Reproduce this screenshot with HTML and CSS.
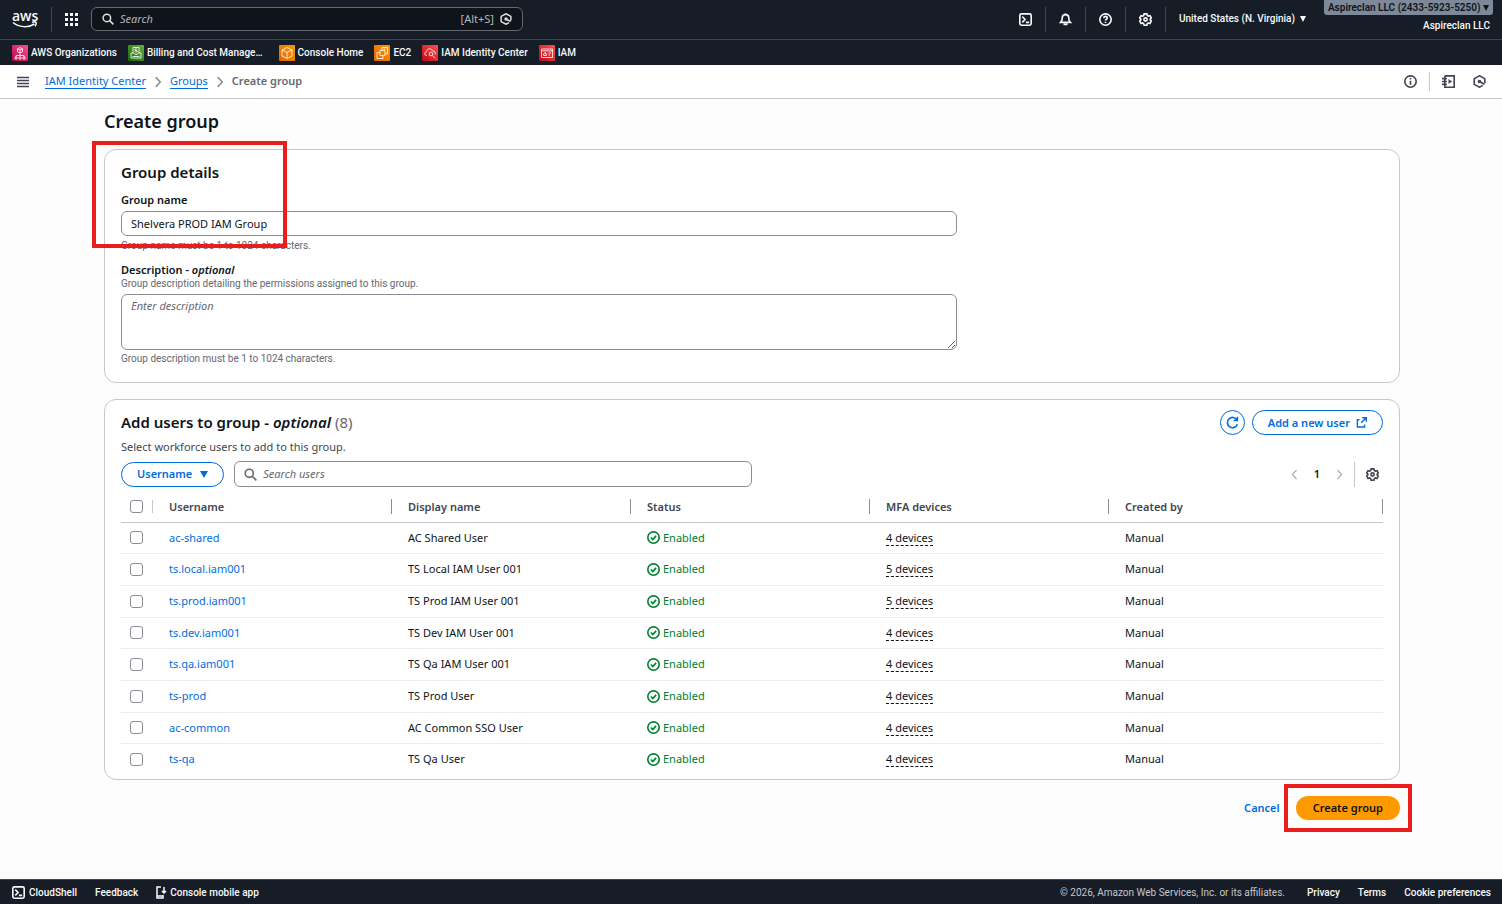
FILE: index.html
```html
<!DOCTYPE html>
<html lang="en">
<head>
    <meta charset="UTF-8">
    <meta name="viewport" content="width=device-width, initial-scale=1.0">
    <title>Create group | IAM Identity Center</title>
    <link rel="stylesheet" href="styles.css">
</head>
<body>
    <!-- shared icons -->
    <svg class="sprite" aria-hidden="true">
        <symbol id="i-search" viewBox="0 0 16 16"><circle cx="6.5" cy="6.5" r="5"/><path d="m10.2 10.2 5 5"/></symbol>
        <symbol id="i-gear" viewBox="0 0 16 16"><path d="M6.3 1h3.4l.5 2 1.3.8 2-.6 1.7 3-1.5 1.3v1l1.5 1.4-1.7 3-2-.6-1.3.8-.5 2H6.3l-.5-2-1.3-.8-2 .6-1.7-3 1.5-1.4v-1L.8 6.2l1.700-3 2 .6L5.800 3z"/><circle cx="8" cy="8" r="2"/></symbol>
        <symbol id="i-shell" viewBox="0 0 16 16"><rect x="1" y="1" width="14" height="14" rx="2"/><path d="m4 4.500 3.500 3.500L4 11.500M8.500 11.500h4"/></symbol>
        <symbol id="i-hex" viewBox="0 0 16 16"><path d="M14.500 10V4.500L8 1 1.500 4.500v7L8 15l4-2.200M8 8l6 3.300"/><circle cx="8" cy="8" r="1.300"/></symbol>
        <symbol id="i-check" viewBox="0 0 16 16"><circle cx="8" cy="8" r="7"/><path d="m4.800 8 2.400 2.500 4-4.500"/></symbol>
        <symbol id="i-right" viewBox="0 0 16 16"><path d="m5 1.500 6 6.500-6 6.500"/></symbol>
        <symbol id="i-left" viewBox="0 0 16 16"><path d="M11 1.500 5 8l6 6.500"/></symbol>
    </svg>

    <header>
        <div class="topbar">
            <a href="#" class="logo" aria-label="AWS home">
                <span>aws</span>
                <svg viewBox="0 0 26 7"><path d="M1 1.500C7 6.500 16 7 22.500 3"/><path d="M20 1.500c2-.8 3.500-.8 4 0s0 2.300-1 3.700"/></svg>
            </a>
            <button class="apps" aria-label="Services">
                <svg viewBox="0 0 13 13"><path d="M0 0h3v3H0zM5 0h3v3H5zM10 0h3v3h-3zM0 5h3v3H0zM5 5h3v3H5zM10 5h3v3h-3zM0 10h3v3H0zM5 10h3v3H5zM10 10h3v3h-3z"/></svg>
            </button>
            <div class="top-search">
                <svg class="icon"><use href="#i-search"/></svg>
                <input type="search" placeholder="Search" aria-label="Search">
                <span>[Alt+S]</span>
                <svg class="icon icon-hex"><use href="#i-hex"/></svg>
            </div>
            <div class="tools">
                <button aria-label="CloudShell"><svg class="icon"><use href="#i-shell"/></svg></button>
                <button aria-label="Notifications"><svg class="icon" viewBox="0 0 16 16"><path d="M2 11.500c1.500-1.500 2-2.500 2-5.500a4 4 0 0 1 8 0c0 3 .5 4 2 5.500z"/><path d="M6.500 12.500v1.500h3v-1.500M8 .5V2"/></svg></button>
                <button aria-label="Help"><svg class="icon" viewBox="0 0 16 16"><circle cx="8" cy="8" r="7"/><path d="M5.800 6.300C5.900 3.500 10.200 3.600 10.200 6c0 1.700-2.200 1.700-2.200 3.300M8 10.800v1.600"/></svg></button>
                <button aria-label="Settings"><svg class="icon"><use href="#i-gear"/></svg></button>
                <button class="region">United States (N. Virginia) <i class="caret"></i></button>
            </div>
            <div class="account">
                <button>Aspireclan LLC (2433-5923-5250) <i class="caret"></i></button>
                <span>Aspireclan LLC</span>
            </div>
        </div>
        <nav class="favorites" aria-label="Favorites">
            <a href="#"><svg class="pink" viewBox="0 0 16 16"><path d="m8 2.500 2.500 1.300v3L8 8 5.500 6.800v-3zM5.500 3.800 8 5l2.500-1.200M8 5v5.500M4 12v-1.500h8V12M3 12h2v2H3zM7 12h2v2H7zM11 12h2v2h-2z"/></svg>AWS Organizations</a>
            <a href="#" class="wide"><svg class="green" viewBox="0 0 16 16"><path d="M5 8V2.500h6V8M3 8h3l1 1.500h2L10 8h3v5H3zM9 4H7v1.500h2V7H7M4.500 11.500h7"/></svg>Billing and Cost Manage…</a>
            <a href="#"><svg class="orange" viewBox="0 0 16 16"><path d="m8 2.500 5 2.500v6l-5 2.500L3 11V5zM3 5l5 2.500L13 5M8 7.500v6"/></svg>Console Home</a>
            <a href="#"><svg class="orange" viewBox="0 0 16 16"><path d="M6 5.500h5v5H6zM9 10.500v3H3v-6h3M8 5.500v-3h5.500V9H11M4.500 9h1M9.500 4h2"/></svg>EC2</a>
            <a href="#"><svg class="red" viewBox="0 0 16 16"><path d="M5 10.500C2 10.500 2 7 4.500 6.800 5 3 9.500 3 10.500 6c2.500-.3 3.500 2 2.500 3.500"/><circle cx="9" cy="9" r="1.800"/><path d="m10.300 10.300 2.700 3"/></svg>IAM Identity Center</a>
            <a href="#"><svg class="red" viewBox="0 0 16 16"><path d="M2.500 4h11v8.500h-11zM2.500 5.800h11M4.500 10.500V8.800h3v1.700zM5.500 7.300h1v1.500M9.500 8h2.500M9.500 10h1.500"/></svg>IAM</a>
        </nav>
    </header>

    <div class="crumbs-bar">
        <button aria-label="Open navigation"><svg class="icon icon-menu" viewBox="0 0 12 12"><path d="M0 1.500h12M0 4.500h12M0 7.500h12M0 10.500h12"/></svg></button>
        <nav class="crumbs" aria-label="Breadcrumbs">
            <a href="#">IAM Identity Center</a>
            <svg class="icon"><use href="#i-right"/></svg>
            <a href="#">Groups</a>
            <svg class="icon"><use href="#i-right"/></svg>
            <span>Create group</span>
        </nav>
        <div class="panel-tools">
            <button aria-label="Info"><svg class="icon" viewBox="0 0 16 16"><circle cx="8" cy="8" r="7"/><path d="M8 3.800v1.700M8 7v5"/></svg></button>
            <button aria-label="Tutorials"><svg class="icon" viewBox="0 0 16 16"><path d="M3.500 1H15v14H3.500V1M0 4.500h6M0 8h6M0 11.500h6"/><path class="fill" d="m8 5 4.500 3L8 11z"/></svg></button>
            <button aria-label="Amazon Q"><svg class="icon"><use href="#i-hex"/></svg></button>
        </div>
    </div>

    <main>
        <h1>Create group</h1>

        <section class="card details">
            <h2>Group details</h2>
            <label for="groupName">Group name</label>
            <input type="text" id="groupName" value="Shelvera PROD IAM Group">
            <p class="hint">Group name must be 1 to 1024 characters.</p>
            <label for="groupDesc">Description - <i>optional</i></label>
            <p class="hint">Group description detailing the permissions assigned to this group.</p>
            <textarea id="groupDesc" placeholder="Enter description"></textarea>
            <p class="hint">Group description must be 1 to 1024 characters.</p>
            <div class="marker"></div>
        </section>

        <section class="card users">
            <div class="users-head">
                <h2>Add users to group - <i>optional</i> <span>(8)</span></h2>
                <div class="actions">
                    <button class="btn round" aria-label="Refresh"><svg class="icon" viewBox="0 0 16 16"><path d="M14 10A6.300 6.300 0 1 1 13.500 5M14 1v4.500H9.500"/></svg></button>
                    <a href="#" class="btn">Add a new user <svg class="icon" viewBox="0 0 16 16"><path d="M5 4H2v10.500h10.500V11M9 1h6v6M15 1 7.500 8.500"/></svg></a>
                </div>
            </div>
            <p class="desc">Select workforce users to add to this group.</p>
            <div class="filters">
                <button class="btn">Username <i class="caret"></i></button>
                <div class="user-search">
                    <svg class="icon"><use href="#i-search"/></svg>
                    <input type="search" placeholder="Search users" aria-label="Search users">
                </div>
                <div class="pages">
                    <button aria-label="Previous page" disabled><svg class="icon"><use href="#i-left"/></svg></button>
                    <button class="current">1</button>
                    <button aria-label="Next page" disabled><svg class="icon"><use href="#i-right"/></svg></button>
                    <button class="prefs" aria-label="Preferences"><svg class="icon"><use href="#i-gear"/></svg></button>
                </div>
            </div>
            <table>
                <thead>
                    <tr>
                        <th class="sel"><div><input type="checkbox" aria-label="Select all users"></div></th>
                        <th><div>Username</div></th>
                        <th><div>Display name</div></th>
                        <th><div>Status</div></th>
                        <th><div>MFA devices</div></th>
                        <th class="last"><div>Created by</div></th>
                    </tr>
                </thead>
                <tbody>
                    <tr>
                        <td class="sel"><input type="checkbox" aria-label="Select ac-shared"></td>
                        <td><a href="#">ac-shared</a></td>
                        <td>AC Shared User</td>
                        <td><span class="enabled"><svg class="icon"><use href="#i-check"/></svg>Enabled</span></td>
                        <td><span class="devices">4 devices</span></td>
                        <td>Manual</td>
                    </tr>
                    <tr>
                        <td class="sel"><input type="checkbox" aria-label="Select ts.local.iam001"></td>
                        <td><a href="#">ts.local.iam001</a></td>
                        <td>TS Local IAM User 001</td>
                        <td><span class="enabled"><svg class="icon"><use href="#i-check"/></svg>Enabled</span></td>
                        <td><span class="devices">5 devices</span></td>
                        <td>Manual</td>
                    </tr>
                    <tr>
                        <td class="sel"><input type="checkbox" aria-label="Select ts.prod.iam001"></td>
                        <td><a href="#">ts.prod.iam001</a></td>
                        <td>TS Prod IAM User 001</td>
                        <td><span class="enabled"><svg class="icon"><use href="#i-check"/></svg>Enabled</span></td>
                        <td><span class="devices">5 devices</span></td>
                        <td>Manual</td>
                    </tr>
                    <tr>
                        <td class="sel"><input type="checkbox" aria-label="Select ts.dev.iam001"></td>
                        <td><a href="#">ts.dev.iam001</a></td>
                        <td>TS Dev IAM User 001</td>
                        <td><span class="enabled"><svg class="icon"><use href="#i-check"/></svg>Enabled</span></td>
                        <td><span class="devices">4 devices</span></td>
                        <td>Manual</td>
                    </tr>
                    <tr>
                        <td class="sel"><input type="checkbox" aria-label="Select ts.qa.iam001"></td>
                        <td><a href="#">ts.qa.iam001</a></td>
                        <td>TS Qa IAM User 001</td>
                        <td><span class="enabled"><svg class="icon"><use href="#i-check"/></svg>Enabled</span></td>
                        <td><span class="devices">4 devices</span></td>
                        <td>Manual</td>
                    </tr>
                    <tr>
                        <td class="sel"><input type="checkbox" aria-label="Select ts-prod"></td>
                        <td><a href="#">ts-prod</a></td>
                        <td>TS Prod User</td>
                        <td><span class="enabled"><svg class="icon"><use href="#i-check"/></svg>Enabled</span></td>
                        <td><span class="devices">4 devices</span></td>
                        <td>Manual</td>
                    </tr>
                    <tr>
                        <td class="sel"><input type="checkbox" aria-label="Select ac-common"></td>
                        <td><a href="#">ac-common</a></td>
                        <td>AC Common SSO User</td>
                        <td><span class="enabled"><svg class="icon"><use href="#i-check"/></svg>Enabled</span></td>
                        <td><span class="devices">4 devices</span></td>
                        <td>Manual</td>
                    </tr>
                    <tr>
                        <td class="sel"><input type="checkbox" aria-label="Select ts-qa"></td>
                        <td><a href="#">ts-qa</a></td>
                        <td>TS Qa User</td>
                        <td><span class="enabled"><svg class="icon"><use href="#i-check"/></svg>Enabled</span></td>
                        <td><span class="devices">4 devices</span></td>
                        <td>Manual</td>
                    </tr>
                </tbody>
            </table>
        </section>

        <div class="submit">
            <a href="#">Cancel</a>
            <div class="primary-wrap">
                <button class="primary">Create group</button>
                <div class="marker"></div>
            </div>
        </div>
    </main>

    <footer>
        <a href="#"><svg class="icon"><use href="#i-shell"/></svg>CloudShell</a>
        <a href="#">Feedback</a>
        <a href="#"><svg class="icon icon-phone" viewBox="0 0 10 13"><path d="M5 1H1v11h6V9M1 10h6M8 1v6M6 5l2 2 2-2"/></svg>Console mobile app</a>
        <span class="copyright">© 2026, Amazon Web Services, Inc. or its affiliates.</span>
        <a href="#">Privacy</a>
        <a href="#">Terms</a>
        <a href="#">Cookie preferences</a>
    </footer>
</body>
</html>
```

FILE: styles.css
```css
* {
    box-sizing: border-box;
}
body {
    margin: 0;
    min-height: 100vh;
    display: flex;
    flex-direction: column;
    background: #fcfcfd;
    color: #0f141a;
    font: 11px/16px "Noto Sans", "Open Sans", sans-serif;
}
h1, h2, p {
    margin: 0;
}
button, input, textarea {
    font: inherit;
    color: inherit;
}
button {
    padding: 0;
    border: 0;
    background: none;
    cursor: pointer;
}
a {
    color: #006ce0;
    text-decoration: none;
}
.sprite {
    position: absolute;
    width: 0;
    height: 0;
}
.icon {
    width: 13px;
    height: 13px;
    flex: none;
    fill: none;
    stroke: currentColor;
    stroke-width: 2;
    overflow: visible;
}
.icon .fill {
    fill: currentColor;
    stroke: none;
}
.caret {
    display: inline-block;
    border: 3px solid transparent;
    border-top: 6px solid currentColor;
    border-bottom: 0;
}

/* top navigation */
header, footer {
    background: #161d26;
    color: #f9f9fa;
    font-family: Roboto, "Noto Sans", sans-serif;
    font-size: 10px;
    font-weight: 500;
}
header a, footer a {
    color: inherit;
}
.topbar {
    display: flex;
    align-items: center;
    height: 40px;
    padding-bottom: 1px;
    border-bottom: 1px solid #424650;
}
.logo {
    width: 26px;
    margin-left: 12px;
    text-align: center;
}
.logo span {
    display: block;
    font: 600 14px/11px "Open Sans", sans-serif;
}
.logo svg {
    display: block;
    width: 26px;
    height: 7px;
    fill: none;
    stroke: currentColor;
    stroke-width: 1.5;
}
.apps {
    display: flex;
    align-items: center;
    height: 25px;
    margin-left: 13px;
    padding: 0 13px;
    border-left: 1px solid #424650;
}
.apps svg {
    width: 13px;
    height: 13px;
    fill: currentColor;
}
.top-search {
    display: flex;
    align-items: center;
    gap: 6px;
    width: 432px;
    height: 24px;
    padding: 0 10px;
    border: 1px solid #656871;
    border-radius: 6px;
    background: #0f141a;
    color: #b4b4bb;
    font: 11px/16px "Noto Sans", sans-serif;
}
.top-search .icon {
    width: 12px;
    height: 12px;
    color: #dedee3;
}
input[type="search"] {
    flex: 1;
    min-width: 0;
    padding: 0;
    border: 0;
    outline: 0;
    background: none;
}
::placeholder {
    color: inherit;
    font-style: italic;
    opacity: 1;
}
.tools {
    display: flex;
    align-items: center;
    margin-left: auto;
}
.tools button {
    display: flex;
    align-items: center;
    justify-content: center;
    width: 40px;
    height: 25px;
    border-right: 1px solid #424650;
}
.tools .region {
    width: auto;
    padding: 0 18px 0 13px;
    gap: 5px;
    border: 0;
}
.account {
    display: flex;
    flex-direction: column;
    align-items: flex-end;
    align-self: flex-start;
    margin-right: 9px;
}
.account button {
    padding: 0 4px;
    border-radius: 0 0 3px 3px;
    background: #7d8998;
    color: #0f141a;
    font-weight: 600;
    line-height: 15px;
}
.account span {
    margin: 3px 3px 0 0;
}
.favorites {
    display: flex;
    align-items: center;
    gap: 11px;
    height: 25px;
    padding: 0 12px;
}
.favorites a {
    display: flex;
    align-items: center;
    gap: 3px;
}
.favorites .wide {
    margin-right: 5px;
}
.favorites svg {
    width: 16px;
    height: 16px;
    border-radius: 1px;
    fill: none;
    stroke: #ffffff;
    stroke-width: 0.8;
}
.pink {
    background: linear-gradient(45deg, #b0084d, #ff4f8b);
}
.green {
    background: linear-gradient(45deg, #1b660f, #6cae3e);
}
.orange {
    background: linear-gradient(45deg, #e26400, #f90);
}
.red {
    background: linear-gradient(45deg, #bd0816, #ff5252);
}

/* breadcrumbs */
.crumbs-bar {
    display: flex;
    align-items: center;
    height: 34px;
    padding: 0 16px;
    border-bottom: 1px solid #c6c6cd;
    background: #ffffff;
    color: #424650;
}
.crumbs-bar button {
    display: flex;
}
.crumbs-bar > button {
    margin-left: 1px;
}
.icon-menu {
    width: 12px;
    height: 12px;
    stroke-width: 1.4;
}
.crumbs {
    display: flex;
    align-items: center;
    gap: 6px;
    margin-left: 16px;
}
.crumbs a {
    border-bottom: 1px solid #006ce0;
    line-height: 14px;
}
.crumbs .icon {
    width: 12px;
    height: 12px;
    color: #8c8c94;
}
.crumbs span {
    padding-bottom: 1px;
    font-weight: 600;
    color: #656871;
}
.panel-tools {
    display: flex;
    align-items: center;
    gap: 18px;
    margin-left: auto;
}
.panel-tools button:first-child {
    margin-right: -6px;
    padding: 3px 12px 3px 0;
    border-right: 1px solid #c6c6cd;
}

/* content */
main {
    flex: 1;
    padding: 10px 102px 0 104px;
}
h1 {
    font-size: 18px;
    font-weight: 600;
    line-height: 24px;
}
h2 {
    font-size: 15px;
    font-weight: 600;
    line-height: 20px;
}
.card {
    position: relative;
    padding: 0 16px;
    border: 1px solid #c6c6cd;
    border-radius: 12px;
    background: #ffffff;
}
.details {
    margin-top: 16px;
    padding-top: 12px;
    padding-bottom: 17px;
}
.details label {
    display: block;
    margin-top: 10px;
    font-weight: 600;
}
.details input, .details textarea {
    display: block;
    width: 100%;
    max-width: 836px;
    padding: 3px 9px;
    border: 1px solid #8c8c94;
    border-radius: 6px;
    background: #ffffff;
}
.details input {
    height: 25px;
    margin-top: 3px;
}
.details textarea {
    height: 56px;
    margin-top: 4px;
    color: #656871;
}
.hint {
    color: #656871;
    font-family: Roboto, "Noto Sans", sans-serif;
    font-size: 10px;
    line-height: 12px;
}
.details input + .hint {
    margin-top: 4px;
}
.details textarea + .hint {
    margin-top: 3px;
}

/* red boxes that point at the steps to take */
.marker {
    position: absolute;
    border: 4px solid #eb1c1c;
    pointer-events: none;
}
.details .marker {
    top: -9px;
    left: -13px;
    width: 195px;
    height: 107px;
}
.primary-wrap .marker {
    inset: -12px;
}

/* users table */
.users {
    margin-top: 16px;
    padding-top: 10px;
    padding-bottom: 4px;
}
.users-head {
    display: flex;
    align-items: center;
    justify-content: space-between;
}
.users h2 {
    padding-bottom: 2px;
}
.users h2 span {
    color: #656871;
    font-weight: 400;
}
.actions {
    display: flex;
    gap: 7px;
}
.btn {
    display: flex;
    align-items: center;
    justify-content: center;
    gap: 8px;
    height: 25px;
    padding: 0 15px;
    border: 1px solid #006ce0;
    border-radius: 13px;
    color: #006ce0;
    font-weight: 600;
}
.actions .btn {
    gap: 6px;
}
.btn .icon {
    width: 11px;
    height: 11px;
}
.btn .caret {
    border-width: 7px 4px 0;
}
.round {
    width: 25px;
    padding: 0;
}
.round .icon {
    width: 13px;
    height: 13px;
}
.desc {
    margin-top: 4px;
    color: #424650;
}
.filters {
    display: flex;
    align-items: center;
    gap: 10px;
    margin-top: 6px;
}
.user-search {
    display: flex;
    align-items: center;
    gap: 6px;
    flex: 1;
    max-width: 518px;
    height: 26px;
    padding: 0 9px;
    border: 1px solid #8c8c94;
    border-radius: 6px;
    color: #656871;
}
.pages {
    display: flex;
    align-items: center;
    gap: 14px;
    margin-left: auto;
}
.pages button {
    display: flex;
    color: #424650;
}
.pages button:disabled {
    color: #b4b4bb;
}
.pages button:disabled .icon {
    width: 11px;
    height: 11px;
}
.pages .current {
    color: #0f141a;
    font-weight: 600;
}
.pages .prefs {
    margin-left: -5px;
    padding: 6px 4px 6px 11px;
    border-left: 1px solid #c6c6cd;
}
table {
    width: 100%;
    margin-top: 4px;
    border-collapse: collapse;
    table-layout: fixed;
}
th, td {
    width: 239px;
    padding: 0;
    text-align: left;
}
th {
    height: 31px;
    border-bottom: 1px solid #c6c6cd;
    color: #424650;
    font-weight: 600;
}
th div {
    padding-left: 16px;
    border-right: 1px solid #8c8c94;
    line-height: 15px;
}
th.last {
    width: auto;
}
td {
    height: 32px;
    padding-left: 16px;
    border-bottom: 1px solid #ebebf0;
}
tbody tr:nth-child(3n + 1) td {
    height: 31px;
}
tbody tr:last-child td {
    border-bottom: 0;
}
.sel {
    width: 32px;
    padding-left: 9px;
}
th.sel {
    padding-left: 0;
}
th.sel div {
    padding-left: 9px;
    border-color: #c6c6cd;
}
input[type="checkbox"] {
    appearance: none;
    display: block;
    width: 13px;
    height: 13px;
    margin: 0;
    border: 1px solid #8c8c94;
    border-radius: 3px;
    background: #ffffff;
}
.enabled {
    display: flex;
    align-items: center;
    gap: 3px;
    color: #00802f;
}
.devices {
    border-bottom: 1px dashed #0f141a;
}

.submit {
    display: flex;
    align-items: center;
    justify-content: flex-end;
    gap: 16px;
    margin-top: 16px;
    font-weight: 600;
}
.primary-wrap {
    position: relative;
}
.primary {
    display: block;
    height: 24px;
    padding: 0 17px;
    border-radius: 12px;
    background: #ff9900;
}

footer {
    display: flex;
    align-items: center;
    gap: 18px;
    height: 25px;
    padding: 1px 11px 0 12px;
    border-top: 1px solid #424650;
}
footer a {
    display: flex;
    align-items: center;
    gap: 4px;
}
.icon-phone {
    width: 10px;
    stroke-width: 1.5;
}
.copyright {
    margin-left: auto;
    margin-right: 4px;
    color: #c6c6cd;
    font-weight: 400;
}
```
